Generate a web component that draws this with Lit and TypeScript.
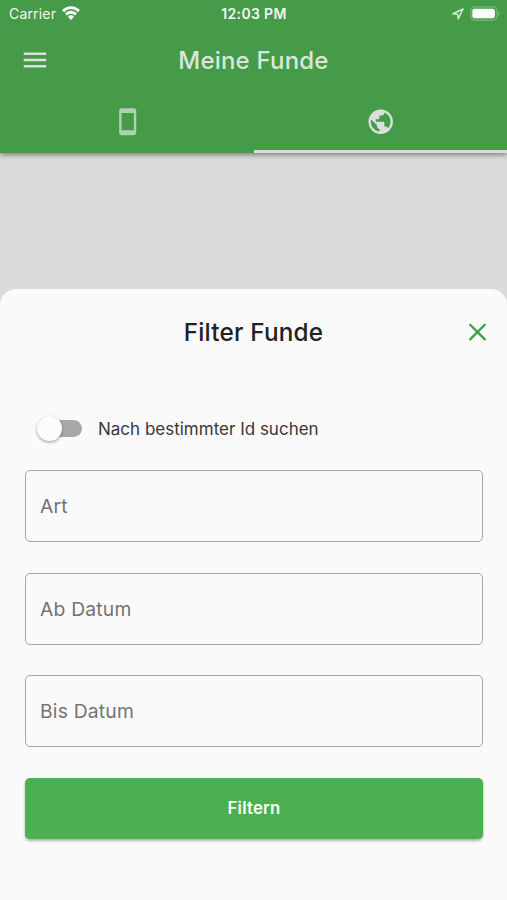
import { LitElement, html, css } from "lit";
import { customElement, property } from "lit/decorators.js";

@customElement("status-bar")
class StatusBar extends LitElement {
  static styles = css`
    :host { display: grid; grid-template-columns: 1fr auto 1fr; align-items: center; height: 27px; padding: 0 7px 0 9px; color: #f2f8f2; }
    .side { display: flex; align-items: center; }
    .end { justify-content: flex-end; gap: 6px; }
    .carrier { font-size: 14px; letter-spacing: 0.17px; margin-right: 6px; }
    .time { font-size: 14px; font-weight: 600; letter-spacing: 0.35px; margin-right: 1px; }
    svg { display: block; }
    .wifi { margin-top: -2px; }
    .battery { margin-top: -1px; }
  `;
  render() {
    return html`
      <div class="side">
        <span class="carrier">Carrier</span>
        <svg class="wifi" width="18" height="14" viewBox="0 0 19 14" preserveAspectRatio="none" fill="none" stroke="#fff" stroke-width="2.9">
          <path d="M1.1 5.1a12 12 0 0 1 16.8 0" />
          <path d="M4.2 8.4a7.6 7.6 0 0 1 10.6 0" />
          <path d="M9.5 14 6.3 10.7a4.4 4.4 0 0 1 6.4 0Z" fill="#fff" stroke="none" />
        </svg>
      </div>
      <span class="time">12:03 PM</span>
      <div class="side end">
        <svg width="12" height="12" viewBox="0 0 12 12" fill="none" stroke="#d6ead6" stroke-width="1.5" stroke-linejoin="round">
          <path d="M11 1 1 5.7l4.7.6.5 4.7Z" />
        </svg>
        <svg class="battery" width="30" height="15" viewBox="0 0 30 15">
          <rect x=".7" y=".9" width="26.4" height="13.2" rx="4" fill="none" stroke="#7ab97c" stroke-width="1.2" />
          <rect x="2.3" y="2.8" width="22.6" height="9.5" rx="2.2" fill="#fff" />
          <path d="M28.2 5.3q1.5.7 1.5 2.2t-1.5 2.2Z" fill="#7ab97c" />
        </svg>
      </div>
    `;
  }
}

@customElement("app-header")
class AppHeader extends LitElement {
  static styles = css`
    :host { display: block; height: 152.5px; background: #459b48; box-shadow: 0 2px 5px rgba(0, 0, 0, 0.42); }
    .bar { display: grid; grid-template-columns: 60px 1fr 60px; align-items: center; height: 65px; }
    .menu { margin-left: 20px; }
    .title { text-align: center; padding-top: 1px; font-size: 24px; font-weight: 500; color: #dbe6db; letter-spacing: 0.2px; }
    .tabs { display: grid; grid-template-columns: 1fr 1fr; height: 60.5px; }
    .tab { display: flex; align-items: center; justify-content: center; box-sizing: border-box; border-bottom: 3px solid transparent; padding-top: 2px; }
    .phone { margin-left: 1px; }
    .active { border-bottom-color: #dbdbdb; }
    svg { display: block; }
  `;
  render() {
    return html`
      <status-bar></status-bar>
      <div class="bar">
        <svg class="menu" width="30" height="30" viewBox="0 0 24 24" fill="#dbe2db">
          <path d="M3 18h18v-2H3v2zm0-5h18v-2H3v2zm0-7v2h18V6H3z" />
        </svg>
        <span class="title">Meine Funde</span>
      </div>
      <div class="tabs">
        <div class="tab">
          <svg class="phone" width="29.4" height="29.4" viewBox="0 0 24 24" fill="#b0d0b1">
            <path d="M17 1.01 7 1c-1.1 0-2 .9-2 2v18c0 1.1.9 2 2 2h10c1.1 0 2-.9 2-2V3c0-1.1-.9-1.99-2-1.99zM17 19H7V5h10v14z" />
          </svg>
        </div>
        <div class="tab active">
          <svg width="29.4" height="29.4" viewBox="0 0 24 24" fill="#dbdfdb">
            <path d="M12 2C6.48 2 2 6.48 2 12s4.48 10 10 10 10-4.48 10-10S17.52 2 12 2zm-1 17.93c-3.95-.49-7-3.85-7-7.93 0-.62.08-1.21.21-1.79L9 15v1c0 1.1.9 2 2 2v1.93zm6.9-2.54c-.26-.81-1-1.39-1.9-1.39h-1v-3c0-.55-.45-1-1-1H8v-2h2c.55 0 1-.45 1-1V7h2c1.1 0 2-.9 2-2v-.41c2.93 1.19 5 4.06 5 7.41 0 2.08-.8 3.97-2.1 5.39z" />
          </svg>
        </div>
      </div>
    `;
  }
}

@customElement("outlined-field")
class OutlinedField extends LitElement {
  @property() label = "";
  static styles = css`
    :host { display: flex; align-items: center; box-sizing: border-box; height: 72px; padding: 0 14.5px; border: 1.2px solid #a6a6a6; border-radius: 5px; font-size: 19.3px; letter-spacing: 0.2px; color: #737373; }
  `;
  render() {
    return html`<span>${this.label}</span>`;
  }
}

@customElement("filter-sheet")
class FilterSheet extends LitElement {
  static styles = css`
    :host { display: flex; flex-direction: column; box-sizing: border-box; background: #fafafa; border-radius: 16px 16px 0 0; padding: 0 24.5px; }
    .head { display: grid; grid-template-columns: 30px 1fr 30px; align-items: center; height: 85px; margin-right: -9.5px; margin-left: -9.5px; }
    .title { grid-column: 2; text-align: center; font-size: 24.3px; font-weight: 500; color: #212121; letter-spacing: 0.2px; }
    .toggle { display: flex; align-items: center; gap: 16px; height: 30px; margin: 39.3px 0 26.4px 12.5px; font-size: 17px; color: #383838; }
    .caption { padding-top: 1px; }
    .switch { display: flex; align-items: center; width: 45px; height: 30px; }
    .track { display: flex; align-items: center; width: 40.5px; height: 17.2px; margin-left: 4.5px; border-radius: 9px; background: #a8a8a8; }
    .thumb { flex: none; width: 24.5px; height: 24.5px; margin-left: -4.5px; border-radius: 50%; background: #fcfcfc; box-shadow: 0 1.5px 3px rgba(0, 0, 0, 0.32), 0 0 1.5px rgba(0, 0, 0, 0.1); }
    .fields { display: flex; flex-direction: column; gap: 30.6px; }
    .submit { height: 61px; margin: 30.6px 0 0; padding: 0 0 0 1px; border: 0; border-radius: 5px; background: #4caf50; color: #f8fff8; font: 600 16.7px Inter, sans-serif; letter-spacing: 0.2px; box-shadow: 0 2px 3px rgba(0, 0, 0, 0.3); }
    svg { display: block; }
  `;
  render() {
    return html`
      <div class="head">
        <span class="title">Filter Funde</span>
        <svg width="30" height="30" viewBox="0 0 30 30" stroke="#3f9f43" stroke-width="2.3" stroke-linecap="round">
          <path d="m8.2 7.8 14.6 14.6m0-14.6-14.6 14.6" />
        </svg>
      </div>
      <div class="toggle">
        <div class="switch"><div class="track"><div class="thumb"></div></div></div>
        <span class="caption">Nach bestimmter Id suchen</span>
      </div>
      <div class="fields">
        ${["Art", "Ab Datum", "Bis Datum"].map((l) => html`<outlined-field label=${l}></outlined-field>`)}
      </div>
      <button class="submit">Filtern</button>
    `;
  }
}

@customElement("app-root")
class AppRoot extends LitElement {
  static styles = css`
    :host { display: flex; flex-direction: column; height: 900px; overflow: hidden; background: #dbdbdb; font-family: Inter, sans-serif; }
    app-header { flex: none; }
    filter-sheet { flex: 1; margin-top: 136.8px; }
  `;
  render() {
    return html`<app-header></app-header><filter-sheet></filter-sheet>`;
  }
}
